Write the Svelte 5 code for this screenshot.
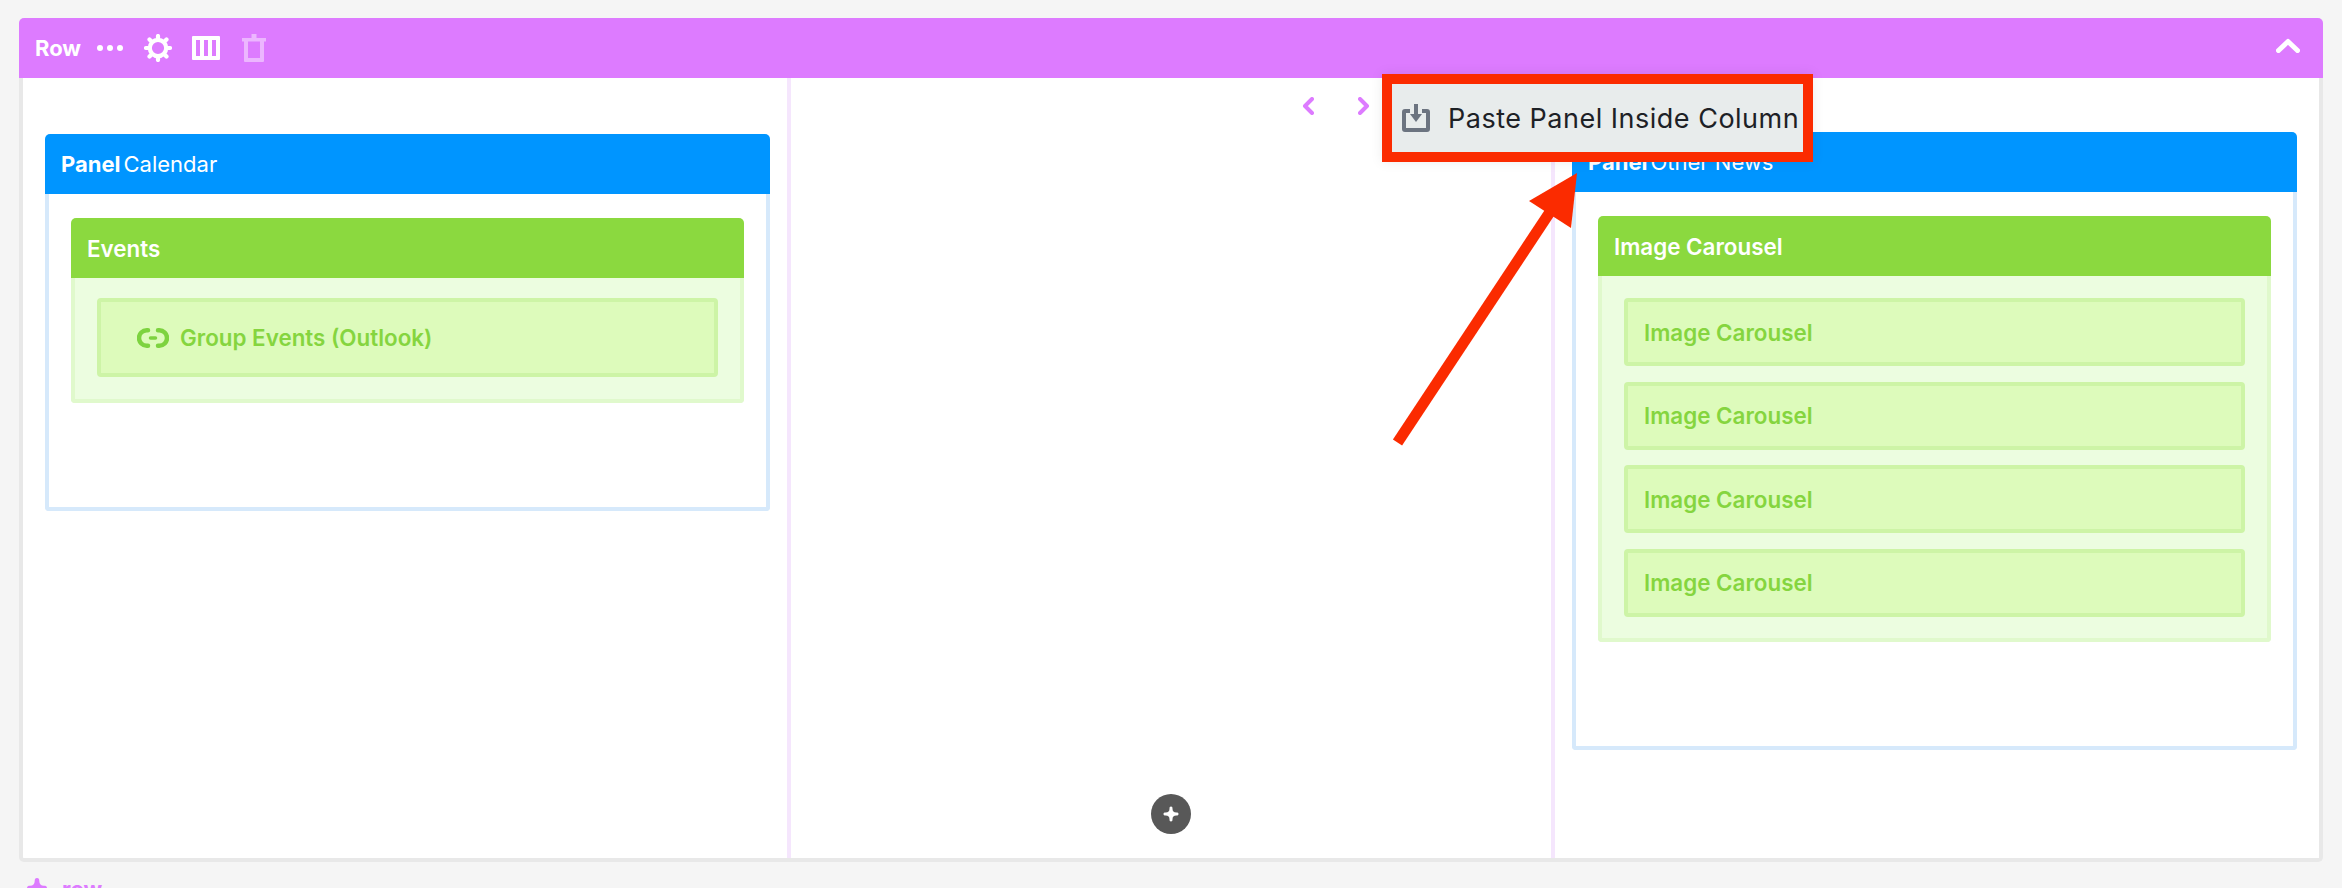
<script lang="ts">
	const carousels = ['Image Carousel', 'Image Carousel', 'Image Carousel', 'Image Carousel'];
</script>

<div class="page">
	<section class="row">
		<header class="row-head">
			<strong>Row</strong>
			<svg class="dots" viewBox="0 0 26 6" width="26" height="6">
				<circle cx="3" cy="3" r="3" /><circle cx="13" cy="3" r="3" /><circle cx="23" cy="3" r="3" />
			</svg>
			<svg class="gear" viewBox="0 0 28 28" width="28" height="28">
				<circle cx="14" cy="14" r="8.200" />
				<path d="M14 4V2M14 24v2M4 14H2M24 14h2M21 7l1.500-1.500M7 21l-1.500 1.500M7 7 5.500 5.500M21 21l1.500 1.500" />
			</svg>
			<svg class="cols" viewBox="0 0 28 24" width="28" height="24">
				<path
					fill-rule="evenodd"
					d="M1 0h26a1 1 0 0 1 1 1v22a1 1 0 0 1-1 1H1a1 1 0 0 1-1-1V1a1 1 0 0 1 1-1zm3 4v16h4V4zm8 0v16h4V4zm8 0v16h4V4z"
				/>
			</svg>
			<svg class="trash" viewBox="0 0 24 28" width="24" height="28">
				<path
					fill-rule="evenodd"
					d="M9.500 0h5v4H24v3.500h-2V27a1 1 0 0 1-1 1H3a1 1 0 0 1-1-1V7.500H0V4h9.500zM6 7.500V24h12V7.500z"
				/>
			</svg>
			<svg class="collapse" viewBox="0 0 24 15" width="24" height="15">
				<path d="M2.500 12.500 12 3.500l9.500 9" />
			</svg>
		</header>

		<div class="columns">
			<div class="col col-left">
				<article class="panel">
					<h2><b>Panel</b> Calendar</h2>
					<div class="panel-body">
						<div class="block">
							<h3>Events</h3>
							<div class="block-body">
								<div class="item item-link">
									<svg viewBox="0 0 32 20" width="32" height="20">
										<path d="M11 2.250H9.750a7.750 7.750 0 0 0 0 15.500H11M21 2.250h1.250a7.750 7.750 0 0 1 0 15.500H21" />
										<path class="dash" d="M13.500 10h5" />
									</svg>
									<span>Group Events (Outlook)</span>
								</div>
							</div>
						</div>
					</div>
				</article>
			</div>

			<div class="col col-mid">
				<div class="pager">
					<svg viewBox="0 0 12 18" width="12" height="18"><path d="M10 2 3 9l7 7" /></svg>
					<svg viewBox="0 0 12 18" width="12" height="18"><path d="m2 2 7 7-7 7" /></svg>
				</div>
				<button class="add" aria-label="Add panel">
					<svg viewBox="0 0 18 18" width="18" height="18">
						<path d="M9 1.500c1.200 0 1.500.8 1.500 2.200 0 2.600 1.200 3.800 3.800 3.800 1.400 0 2.200.3 2.200 1.500s-.8 1.500-2.200 1.500c-2.600 0-3.800 1.200-3.800 3.800 0 1.400-.3 2.200-1.500 2.200s-1.500-.8-1.500-2.200c0-2.600-1.200-3.800-3.800-3.800-1.400 0-2.200-.3-2.200-1.500s.8-1.500 2.200-1.500c2.600 0 3.800-1.200 3.800-3.800 0-1.400.3-2.200 1.500-2.200z" />
					</svg>
				</button>
			</div>

			<div class="col col-right">
				<article class="panel">
					<h2><b>Panel</b> Other News</h2>
					<div class="panel-body">
						<div class="block">
							<h3>Image Carousel</h3>
							<div class="block-body">
								{#each carousels as label}
									<div class="item"><span>{label}</span></div>
								{/each}
							</div>
						</div>
					</div>
				</article>
			</div>
		</div>

		<div class="paste">
			<svg viewBox="0 0 28 28" width="28" height="28">
				<path d="M3 5h5v4H4v15h20V9h-4V5h5a3 3 0 0 1 3 3v17a3 3 0 0 1-3 3H3a3 3 0 0 1-3-3V8a3 3 0 0 1 3-3z" />
				<path d="M12 0h4v10h4l-6 8-6-8h4z" />
			</svg>
			<span>Paste Panel Inside Column</span>
		</div>
	</section>

	<div class="add-row">
		<svg viewBox="0 0 20 20" width="20" height="20">
			<path d="M10 0c1.700 0 2.300 1.200 2.300 3 0 3.100 1.600 4.700 4.700 4.700 1.800 0 3 .6 3 2.300s-1.200 2.300-3 2.300c-3.100 0-4.700 1.600-4.700 4.700 0 1.800-.6 3-2.300 3s-2.300-1.200-2.300-3c0-3.100-1.600-4.700-4.700-4.700-1.800 0-3-.6-3-2.300s1.200-2.300 3-2.300c3.100 0 4.700-1.600 4.700-4.700C7.700 1.200 8.300 0 10 0z" />
		</svg>
		<span>row</span>
	</div>

	<svg class="arrow" viewBox="0 0 2342 888" width="2342" height="888" aria-hidden="true">
		<path d="M1397.500 442.500 1550 212" />
		<polygon points="1577,173 1529,201 1571,228" />
	</svg>
</div>

<style>
	:global(body) {
		margin: 0;
		background: #f5f5f5;
	}

	.page {
		position: relative;
		box-sizing: border-box;
		width: 2342px;
		height: 888px;
		padding: 18px 19px 0;
		overflow: hidden;
		font-family: Inter, 'Noto Sans', sans-serif;
		background: #f5f5f5;
	}

	.row {
		position: relative;
		width: 2304px;
	}

	.row-head {
		display: flex;
		align-items: center;
		height: 60px;
		padding: 0 23px 0 16px;
		box-sizing: border-box;
		color: #fff;
		fill: #fff;
		font-size: 22px;
		background: #dd7bff;
		border-radius: 5px 5px 0 0;
	}

	.row-head strong {
		font-weight: 700;
	}

	.dots {
		margin-left: 16px;
	}

	.gear {
		margin-left: 21px;
		fill: none;
		stroke: #fff;
		stroke-width: 4.200;
		stroke-linecap: round;
	}

	.cols {
		margin-left: 20px;
	}

	.trash {
		margin-left: 22px;
		opacity: 0.45;
	}

	.collapse {
		margin-left: auto;
		margin-top: -6px;
		fill: none;
		stroke: #fff;
		stroke-width: 5;
		stroke-linecap: round;
		stroke-linejoin: round;
	}

	.columns {
		display: grid;
		grid-template-columns: 764px 764px 768px;
		height: 780px;
		background: #fff;
		border: 4px solid #e8e8e8;
		border-top: 0;
		border-radius: 0 0 5px 5px;
	}

	.col {
		box-sizing: border-box;
		min-width: 0;
	}

	.col-left {
		padding: 56px 17px 0 22px;
	}

	.col-mid {
		display: flex;
		flex-direction: column;
		align-items: center;
		border-left: 4px solid #f5e6fd;
	}

	.col-right {
		padding: 54px 22px 0 17px;
		border-left: 4px solid #f5e6fd;
	}

	.pager {
		display: flex;
		gap: 44px;
		align-self: flex-start;
		margin: 19px 0 0 511px;
		fill: none;
		stroke: #dd7bff;
		stroke-width: 4;
		stroke-linecap: round;
		stroke-linejoin: round;
	}

	.add {
		display: flex;
		align-items: center;
		justify-content: center;
		width: 40px;
		height: 40px;
		margin-top: auto;
		margin-bottom: 24px;
		padding: 0;
		fill: #fff;
		background: #585858;
		border: 0;
		border-radius: 50%;
	}

	.panel {
		display: flex;
		flex-direction: column;
	}

	.panel h2 {
		display: flex;
		align-items: center;
		gap: 3px;
		height: 60px;
		margin: 0;
		padding: 0 0 0 16px;
		color: #fff;
		font-size: 22px;
		font-weight: 400;
		background: #0095ff;
		border-radius: 5px 5px 0 0;
	}

	.panel h2 b {
		font-weight: 700;
	}

	.panel-body {
		padding: 24px 22px 104px;
		border: 4px solid #d6e9fb;
		border-top: 0;
		border-radius: 0 0 4px 4px;
	}

	.block h3 {
		display: flex;
		align-items: center;
		height: 60px;
		margin: 0;
		padding: 0 16px;
		color: #fff;
		font-size: 22.400px;
		font-weight: 600;
		background: #8bd93f;
		border-radius: 5px 5px 0 0;
	}

	.block-body {
		display: flex;
		flex-direction: column;
		gap: 15.500px;
		padding: 20px 22px 22px;
		background: #ecfde0;
		border: 4px solid #e0f9cc;
		border-top: 0;
		border-radius: 0 0 4px 4px;
	}

	.col-right .block-body {
		padding: 22px 22px 21px;
	}

	.item {
		display: flex;
		align-items: center;
		gap: 11px;
		box-sizing: border-box;
		height: 68px;
		padding: 0 16px;
		color: #85d53f;
		font-size: 22.400px;
		font-weight: 600;
		background: #ddfbbb;
		border: 4px solid #cdf4a6;
		border-radius: 4px;
	}

	.item-link {
		height: 79px;
		padding-left: 36px;
	}

	.item-link svg {
		fill: none;
		stroke: #7dd33f;
		stroke-width: 4.500;
		stroke-linecap: round;
	}

	.item-link .dash {
		stroke-width: 3.500;
	}

	.paste {
		position: absolute;
		top: 56px;
		left: 1363px;
		display: flex;
		align-items: center;
		gap: 18px;
		box-sizing: border-box;
		width: 431px;
		height: 88px;
		padding: 0 0 0 10px;
		color: #1d2126;
		fill: #6c7480;
		font-size: 27px;
		background: #e8ecec;
		border: 10px solid #fb2b00;
		box-shadow: 0 0 12px rgba(0, 0, 0, 0.08);
	}

	.paste span {
		letter-spacing: 0.5px;
		white-space: nowrap;
	}

	.add-row {
		display: flex;
		align-items: flex-start;
		gap: 15px;
		margin: 16px 0 0 8px;
		color: #dd7bff;
		fill: #dd7bff;
		font-size: 22px;
		font-weight: 700;
	}

	.add-row span {
		margin-top: -2px;
	}

	.arrow {
		position: absolute;
		top: 0;
		left: 0;
		fill: #fb2b00;
		pointer-events: none;
	}

	.arrow path {
		fill: none;
		stroke: #fb2b00;
		stroke-width: 11;
	}
</style>
